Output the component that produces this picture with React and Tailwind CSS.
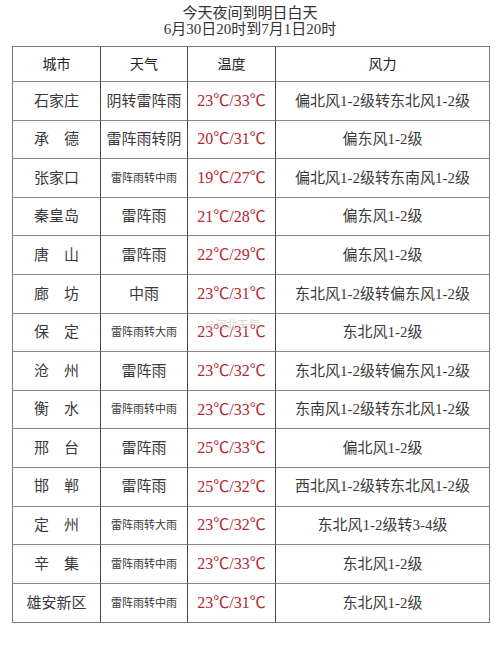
const rows = [
  ["石家庄", "阴转雷阵雨", false, "23℃/33℃", "偏北风1-2级转东北风1-2级"],
  ["承　德", "雷阵雨转阴", false, "20℃/31℃", "偏东风1-2级"],
  ["张家口", "雷阵雨转中雨", true, "19℃/27℃", "偏北风1-2级转东南风1-2级"],
  ["秦皇岛", "雷阵雨", false, "21℃/28℃", "偏东风1-2级"],
  ["唐　山", "雷阵雨", false, "22℃/29℃", "偏东风1-2级"],
  ["廊　坊", "中雨", false, "23℃/31℃", "东北风1-2级转偏东风1-2级"],
  ["保　定", "雷阵雨转大雨", true, "23℃/31℃", "东北风1-2级"],
  ["沧　州", "雷阵雨", false, "23℃/32℃", "东北风1-2级转偏东风1-2级"],
  ["衡　水", "雷阵雨转中雨", true, "23℃/33℃", "东南风1-2级转东北风1-2级"],
  ["邢　台", "雷阵雨", false, "25℃/33℃", "偏北风1-2级"],
  ["邯　郸", "雷阵雨", false, "25℃/32℃", "西北风1-2级转东北风1-2级"],
  ["定　州", "雷阵雨转大雨", true, "23℃/32℃", "东北风1-2级转3-4级"],
  ["辛　集", "雷阵雨转中雨", true, "23℃/33℃", "东北风1-2级"],
  ["雄安新区", "雷阵雨转中雨", true, "23℃/31℃", "东北风1-2级"],
];

const font = { fontFamily: '"Liberation Serif", "Noto Sans CJK SC", serif' };

export default function App() {
  return (
    <div className="relative w-[500px] h-[646px] bg-white text-[#3a3a3a]" style={font}>
      <div className="h-[46px] flex flex-col items-center pt-[6px] text-[15px] leading-[15.5px] text-[#333]">
        <div>今天夜间到明日白天</div>
        <div>6月30日20时到7月1日20时</div>
      </div>
      <div className="ml-[12px] w-[478px] border border-[#7a7a7a] grid grid-cols-[88px_87px_88px_1fr]">
        {["城市", "天气", "温度", "风力"].map((h, i) => (
          <div
            key={h}
            className={`h-[35px] flex items-center justify-center text-[14px] text-[#222] border-b border-[#8a8a8a] ${i < 3 ? "border-r border-r-[#444]" : ""}`}
          >
            {h}
          </div>
        ))}
        {rows.map((r, ri) => (
          <div key={ri} className="contents">
            <div className={`h-[38.6px] flex items-center justify-center text-[15px] border-r border-r-[#444] ${ri < rows.length - 1 ? "border-b border-[#8a8a8a]" : ""}`}>
              {r[0]}
            </div>
            <div className={`h-[38.6px] flex items-center justify-center border-r border-r-[#444] ${r[2] ? "text-[11px]" : "text-[15px]"} ${ri < rows.length - 1 ? "border-b border-[#8a8a8a]" : ""}`}>
              {r[1]}
            </div>
            <div className={`h-[38.6px] flex items-center justify-center text-[16px] text-[#b3262e] border-r border-r-[#444] ${ri < rows.length - 1 ? "border-b border-[#8a8a8a]" : ""}`}>
              {r[3]}
            </div>
            <div className={`h-[38.6px] flex items-center justify-center text-[15px] ${ri < rows.length - 1 ? "border-b border-[#8a8a8a]" : ""}`}>
              {r[4]}
            </div>
          </div>
        ))}
      </div>
      <div className="absolute left-[205px] top-[316px] text-[11px] text-[#c8c8c8] opacity-70" style={{ fontFamily: '"Noto Sans CJK SC", sans-serif' }}>
        @河北天气
      </div>
    </div>
  );
}
